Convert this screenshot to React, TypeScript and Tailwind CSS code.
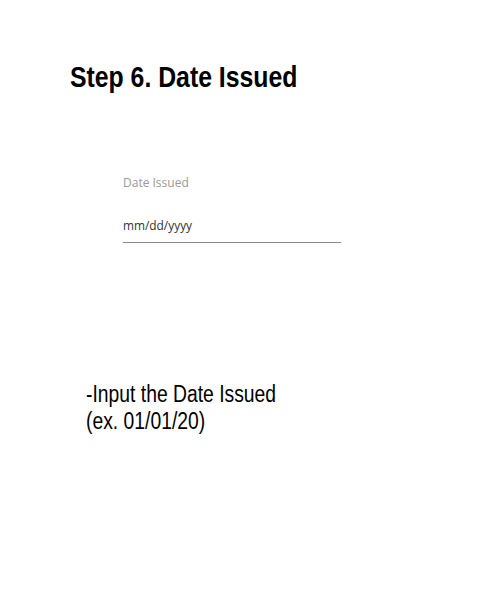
export default function App() {
  return (
    <main className="w-[500px] h-[600px] bg-white flex flex-col">
      <h1 className="ml-[70px] mt-[60px] text-[29px] leading-[34px] font-bold text-black font-['Liberation_Sans',sans-serif]">
        <span className="inline-block origin-left scale-x-[0.855] whitespace-nowrap">Step 6. Date Issued</span>
      </h1>

      <div className="ml-[123px] mt-[81px] w-[218px] flex flex-col">
        <label className="text-[12px] leading-[16px] text-[#9a9a9a] font-['Open_Sans',sans-serif]">
          Date Issued
        </label>
        <div className="mt-[26px] pb-[7px] border-b border-[#8a8a8a] text-[12.5px] leading-[18px] text-[#333] font-['Open_Sans',sans-serif]">
          <span className="inline-block origin-left scale-x-[0.95]">mm/dd/yyyy</span>
        </div>
      </div>

      <div className="ml-[86px] mt-[138px] text-[23px] leading-[27px] text-black font-['Liberation_Sans',sans-serif]">
        <p className="origin-left scale-x-[0.84] whitespace-nowrap">-Input the Date Issued</p>
        <p className="origin-left scale-x-[0.84] whitespace-nowrap">(ex. 01/01/20)</p>
      </div>
    </main>
  );
}
